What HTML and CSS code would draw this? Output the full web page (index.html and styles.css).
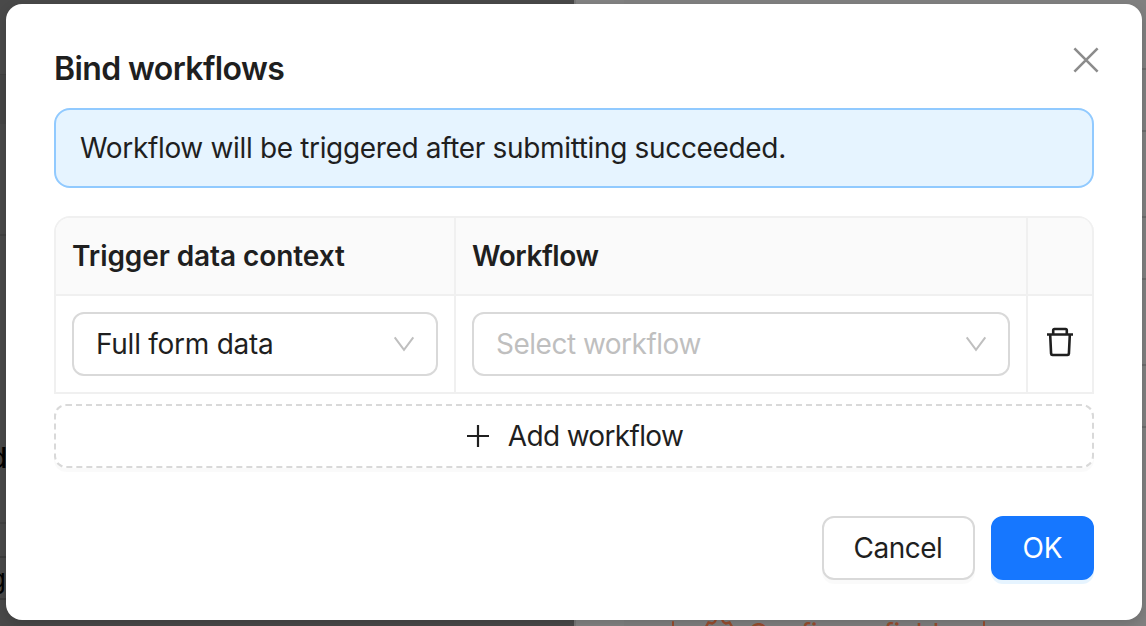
FILE: index.html
```html
<!DOCTYPE html>
<html lang="en">
<head>
<meta charset="utf-8">
<title>Bind workflows</title>
<link rel="stylesheet" href="styles.css">
</head>
<body>
<div class="page" aria-hidden="true">
  <div class="page-side">
    <div class="side-band"></div>
    <div class="side-rule"></div>
    <div class="side-heading">d</div>
    <div class="side-row"></div>
    <div class="side-cell">g</div>
  </div>
  <div class="page-main">
    <div class="page-gutter"></div>
    <div class="page-form">
      <div class="field"></div>
      <div class="field"></div>
      <div class="field"></div>
      <div class="configure">
        <svg class="gear" viewBox="0 0 28 28"><path d="M10.500-2H17.500V.500Q18 2.500 21 3.500L24.500 2.500 28 8.500 25 11.500V16.500L28 19.500 24.500 25.500 21 24.500Q18 25.500 17.500 27.500V30H10.500V27.500Q10 25.500 7 24.500L3.500 25.500 0 19.500 3 16.500V11.500L0 8.500 3.500 2.500 7 3.500Q10 2.500 10.500.500z"/><circle cx="14" cy="14" r="4.500"/></svg>
        <span>Configure fields</span>
      </div>
    </div>
  </div>
</div>
<div class="modal" role="dialog" aria-labelledby="title">
  <header class="modal-head">
    <h1 class="title" id="title">Bind workflows</h1>
    <button class="close" aria-label="Close"><svg viewBox="0 0 28 28"><path d="M2.400 2.400 25.600 25.600M25.600 2.400 2.400 25.600"/></svg></button>
  </header>
  <div class="alert">Workflow will be triggered after submitting succeeded.</div>
  <div class="table">
    <div class="cell head">Trigger data context</div>
    <div class="cell head">Workflow</div>
    <div class="cell head"></div>
    <div class="cell">
      <div class="select"><span>Full form data</span><svg class="chevron" viewBox="0 0 24 24"><path d="M2.700 5.300 12 17.800 21.300 5.300"/></svg></div>
    </div>
    <div class="cell">
      <div class="select placeholder"><span>Select workflow</span><svg class="chevron" viewBox="0 0 24 24"><path d="M2.700 5.300 12 17.800 21.300 5.300"/></svg></div>
    </div>
    <div class="cell action">
      <svg class="trash" viewBox="0 0 28 30"><path d="M1 7.500H27M7.200 7V3.200Q7.200 2 8.400 2H19.600Q20.800 2 20.800 3.200V7M4.200 8 5.100 26.700Q5.200 28 6.500 28H21.500Q22.800 28 22.900 26.700L23.800 8"/></svg>
    </div>
  </div>
  <button class="add"><svg class="plus" viewBox="0 0 22 22"><path d="M11 0V22M0 11H22"/></svg><span>Add workflow</span></button>
  <footer class="actions">
    <button class="btn">Cancel</button>
    <button class="btn primary">OK</button>
  </footer>
</div>
</body>
</html>
```
FILE: styles.css
```css
* { box-sizing: border-box; }
body {
  margin: 0;
  width: 1146px;
  height: 626px;
  overflow: hidden;
  position: relative;
  font: 28px/44px Inter, "Liberation Sans", sans-serif;
  color: #1f1f1f;
}
button { font: inherit; color: inherit; padding: 0; margin: 0; background: #fff; }
svg { display: block; fill: none; stroke: currentColor; flex: none; }
span { white-space: nowrap; }

/* dimmed page behind the dialog */
.page { display: flex; height: 626px; overflow: hidden; }
.page-side { width: 574px; background: #494949; color: #000; flex: none; overflow: hidden; }
.side-band { margin-top: 74px; height: 50px; background: #454545; border-top: 1px solid #404040; }
.side-rule { margin-top: 110px; height: 2px; background: #414141; }
.side-heading { margin-top: 200px; height: 44px; margin-left: -10px; font-weight: 500; line-height: 44px; }
.side-row { margin-top: 42px; height: 36px; border-top: 2px solid #414141; border-bottom: 2px solid #3c3c3c; }
.side-cell { height: 42px; margin-left: -10px; border-bottom: 2px solid #3c3c3c; line-height: 42px; font-size: 26px; }
.page-main { flex: 1; display: flex; background: #808080; border-left: 2px solid #777; }
.page-gutter { width: 48px; background: #838383; }
.page-form { flex: 1; padding: 68px 0 0 48px; }
.field { height: 64px; margin-bottom: 84px; border: 2px solid #6d6d6d; border-right: 0; }
.configure {
  margin-top: 174px;
  width: 313px;
  height: 64px;
  display: flex;
  align-items: center;
  gap: 15px;
  padding-left: 31px;
  border: 2px dashed #9a4e2f;
  color: #9a4e2f;
  letter-spacing: -0.35px;
}
.gear { width: 28px; height: 28px; stroke-width: 2.400; overflow: visible; }

.modal {
  position: absolute;
  left: 6px;
  top: 4px;
  width: 1136px;
  height: 616px;
  padding: 40px 48px;
  background: #fff;
  border-radius: 16px;
  box-shadow: 0 4px 12px rgba(0, 0, 0, .15);
}
.modal-head { display: flex; justify-content: space-between; height: 64px; }
.title { margin: 0; font-size: 32px; font-weight: 600; line-height: 50px; letter-spacing: -0.6px; }
.close { width: 28px; height: 28px; margin: 2px -6px 0 0; border: 0; color: #8c8c8c; }
.close svg { width: 28px; height: 28px; stroke-width: 2.600; }

.alert {
  height: 80px;
  padding: 16px 24px;
  border: 2px solid #91caff;
  border-radius: 16px;
  background: #e6f4ff;
  letter-spacing: -0.34px;
}
.table {
  display: grid;
  grid-template-columns: 400px 572px 66px;
  grid-template-rows: 78px 98px;
  height: 178px;
  margin-top: 28px;
  border: 2px solid #f0f0f0;
  border-right: 0;
  border-bottom: 0;
  border-radius: 16px 16px 0 0;
}
.cell { padding: 16px; border-right: 2px solid #f0f0f0; border-bottom: 2px solid #f0f0f0; }
.head { background: #fafafa; font-weight: 600; letter-spacing: -0.45px; }
.head:first-child { border-top-left-radius: 14px; letter-spacing: -0.08px; }
.head:nth-child(3) { border-top-right-radius: 14px; }
.select {
  display: flex;
  align-items: center;
  justify-content: space-between;
  height: 64px;
  padding: 0 20px 0 22px;
  border: 2px solid #d9d9d9;
  border-radius: 12px;
  letter-spacing: -0.26px;
}
.placeholder { color: #bfbfbf; letter-spacing: -0.5px; }
.chevron { width: 24px; height: 24px; color: #bfbfbf; stroke-width: 2; }
.action { display: flex; justify-content: center; padding: 31px 0 0; }
.trash { width: 28px; height: 30px; stroke-width: 2.600; }

.add {
  display: flex;
  align-items: center;
  justify-content: center;
  gap: 19px;
  width: 100%;
  height: 64px;
  margin-top: 10px;
  padding-left: 2px;
  border: 2px dashed #d9d9d9;
  border-radius: 12px;
  box-shadow: 0 4px 0 rgba(0, 0, 0, .02);
  letter-spacing: -0.67px;
}
.plus { width: 22px; height: 22px; stroke-width: 2.200; }
.actions { display: flex; justify-content: flex-end; gap: 16px; margin-top: 48px; }
.btn {
  width: 153px;
  height: 64px;
  border: 2px solid #d9d9d9;
  border-radius: 12px;
  box-shadow: 0 4px 0 rgba(0, 0, 0, .02);
  letter-spacing: -0.5px;
  padding-right: 1px;
}
.primary { width: 103px; border-color: #1677ff; background: #1677ff; color: #fff; box-shadow: 0 4px 0 rgba(5, 145, 255, .1); letter-spacing: 0; padding: 0; }
```
